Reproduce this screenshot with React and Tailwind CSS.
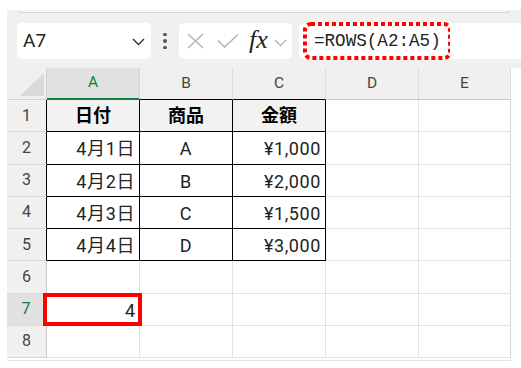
import React from 'react';

const data = [
  ['日付', '商品', '金額'],
  ['4月1日', 'A', '¥1,000'],
  ['4月2日', 'B', '¥2,000'],
  ['4月3日', 'C', '¥1,500'],
  ['4月4日', 'D', '¥3,000'],
];

const letters = ['A', 'B', 'C', 'D', 'E'];
const rows = [1, 2, 3, 4, 5, 6, 7, 8];

function ColHead({ col }) {
  if (col === 'A') {
    return (
      <div className="flex items-center justify-center bg-[#e1e1e1] text-[#107c41] border-r border-b-2 border-[#107c41] border-r-[#d4d4d4] text-[15.5px]">
        A
      </div>
    );
  }
  const bottom = col === 'B' || col === 'C' ? 'border-b-black' : 'border-b-[#c8c8c8]';
  return (
    <div className={`flex items-center justify-center bg-[#f0f0f0] text-[#444] border-r border-b border-[#dcdcdc] ${bottom} text-[15.5px]`}>
      {col}
    </div>
  );
}

function RowHead({ r }) {
  if (r === 7) {
    return (
      <div className="flex items-center justify-center bg-[#e1e1e1] text-[#107c41] border-b border-r-2 border-[#dadada] border-r-[#107c41] text-[16px]">
        7
      </div>
    );
  }
  const right = r <= 5 ? 'border-r-black' : 'border-r-[#c8c8c8]';
  return (
    <div className={`flex items-center justify-center bg-[#f0f0f0] text-[#444] border-b border-r border-[#dadada] ${right} text-[16px]`}>
      {r}
    </div>
  );
}

function Cell({ r, c }) {
  const inTable = r <= 5 && c <= 2;
  const edge = inTable ? 'border-black' : c === 4 ? 'border-[#e1e1e1] border-r-[#d4d4d4]' : 'border-[#e1e1e1]';
  const value = inTable ? data[r - 1][c] : null;

  if (r === 7 && c === 0) {
    return (
      <div className="relative flex items-center justify-end pr-[4px] pt-[2px] border-r border-b border-[#e1e1e1] text-[18px] text-[#222]">
        4
        <div className="absolute -left-[4px] -right-[3px] -top-[1px] -bottom-[1px] border-4 border-[#ff0000]" />
      </div>
    );
  }

  if (r === 1 && inTable) {
    return (
      <div className={`flex items-center justify-center bg-[#f2f2f2] border-r border-b ${edge} text-[18px] font-bold text-black`}>
        {value}
      </div>
    );
  }

  const align = c === 1 ? 'justify-center' : 'justify-end pr-[4px]';
  return (
    <div className={`flex items-center ${align} pt-[2px] border-r border-b ${edge} text-[18px] tracking-[0.6px] text-[#222]`}>
      {value}
    </div>
  );
}

export default function App() {
  return (
    <div className="w-[521px] h-[368px] bg-white overflow-hidden" style={{ fontFamily: 'Roboto, "Noto Sans CJK JP", sans-serif' }}>
      <div className="pt-[10px] pl-[7px]">
        {/* formula bar */}
        <div className="h-[58px] bg-[#f0f0f0]">
          <div className="mx-[12px] h-[3px] rounded-b-[4px] border-b border-x border-[#d6d6d6] bg-[#f6f6f6]" />
          <div className="flex pt-[10px] pl-[10px]">
            <div className="w-[134px] h-[36px] rounded-[5px] bg-white flex items-center justify-between pl-[6px] pr-[6px]">
              <span className="text-[19px] text-[#222]">A7</span>
              <svg width="13" height="8" viewBox="0 0 13 8" className="mt-[2px]">
                <path d="M1 1 L6.5 6.5 L12 1" fill="none" stroke="#333" strokeWidth="1.4" />
              </svg>
            </div>
            <div className="w-[28px] flex flex-col items-center justify-center gap-[3px]">
              <span className="w-[3.5px] h-[3.5px] rounded-full bg-[#555]" />
              <span className="w-[3.5px] h-[3.5px] rounded-full bg-[#555]" />
              <span className="w-[3.5px] h-[3.5px] rounded-full bg-[#555]" />
            </div>
            <div className="w-[113px] h-[36px] rounded-[5px] bg-white flex items-center pl-[8px]">
              <svg width="17" height="16" viewBox="0 0 17 16">
                <path d="M1 1 L16 15 M16 1 L1 15" fill="none" stroke="#b4b4b4" strokeWidth="1.5" />
              </svg>
              <svg width="22" height="14" viewBox="0 0 22 14" className="ml-[13px]">
                <path d="M1 6.5 L7.5 13 L21 0.5" fill="none" stroke="#b4b4b4" strokeWidth="1.5" />
              </svg>
              <span className="ml-[10px] text-[26px] leading-none italic text-[#222] -mt-[3px]" style={{ fontFamily: '"Liberation Serif", serif' }}>
                fx
              </span>
              <svg width="13" height="8" viewBox="0 0 13 8" className="ml-[6px] mt-[3px]">
                <path d="M1 1 L6.5 6.5 L12 1" fill="none" stroke="#b4b4b4" strokeWidth="1.4" />
              </svg>
            </div>
            <div className="ml-[7px] flex-1 h-[36px] rounded-l-[5px] bg-white flex items-center">
              <div className="relative ml-[4px] h-[38px] flex items-center pl-[11px] pr-[9px]">
                <span className="text-[17.6px] text-[#222]" style={{ fontFamily: '"Liberation Mono", monospace' }}>
                  =ROWS(A2:A5)
                </span>
                <svg className="absolute inset-0 w-full h-full" preserveAspectRatio="none">
                  <rect x="2" y="2" width="145" height="34" rx="6" fill="none" stroke="#ff0000" strokeWidth="4" strokeDasharray="4 3" />
                </svg>
              </div>
            </div>
          </div>
        </div>

        {/* grid */}
        <div className="grid grid-cols-[40px_93px_93px_93px_93px_92px] grid-rows-[32px_repeat(8,32.25px)] w-[504px]">
          <div className="bg-[#f0f0f0] border-r border-b border-[#d0d0d0]">
            <svg width="40" height="32" viewBox="0 0 40 32">
              <polygon points="13,28 37,28 37,5" fill="#dadada" />
            </svg>
          </div>
          {letters.map((l) => (
            <ColHead key={l} col={l} />
          ))}
          {rows.map((r) => (
            <React.Fragment key={r}>
              <RowHead r={r} />
              {letters.map((l, c) => (
                <Cell key={l} r={r} c={c} />
              ))}
            </React.Fragment>
          ))}
        </div>
        <div className="w-[504px] h-[3px] border-b border-[#e1e1e1] bg-white" />
      </div>
    </div>
  );
}
